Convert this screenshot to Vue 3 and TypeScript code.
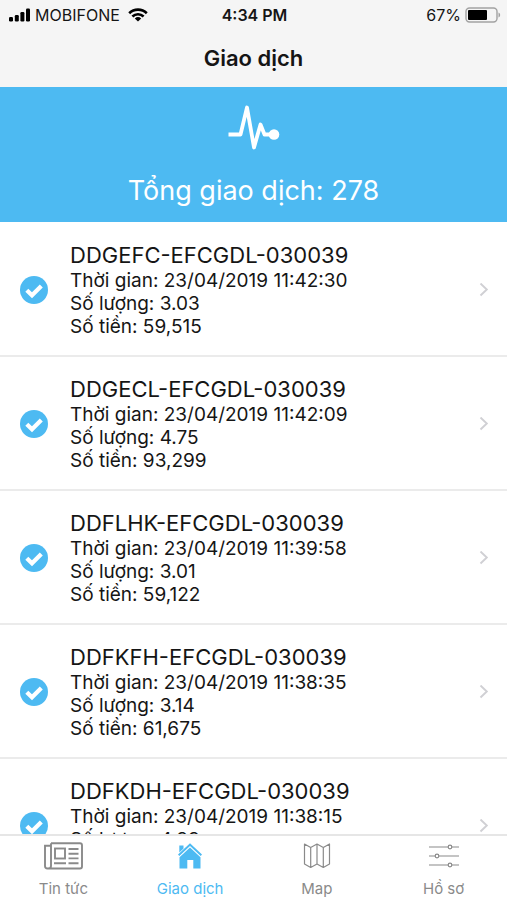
<script setup lang="ts">
interface Transaction {
  code: string
  time: string
  quantity: string
  amount: string
}

interface Tab {
  icon: 'news' | 'home' | 'map' | 'profile'
  label: string
  active?: boolean
}

const total = 278

const transactions: Transaction[] = [
  { code: 'DDGEFC-EFCGDL-030039', time: '23/04/2019 11:42:30', quantity: '3.03', amount: '59,515' },
  { code: 'DDGECL-EFCGDL-030039', time: '23/04/2019 11:42:09', quantity: '4.75', amount: '93,299' },
  { code: 'DDFLHK-EFCGDL-030039', time: '23/04/2019 11:39:58', quantity: '3.01', amount: '59,122' },
  { code: 'DDFKFH-EFCGDL-030039', time: '23/04/2019 11:38:35', quantity: '3.14', amount: '61,675' },
  { code: 'DDFKDH-EFCGDL-030039', time: '23/04/2019 11:38:15', quantity: '4.33', amount: '85,049' },
]

const tabs: Tab[] = [
  { icon: 'news', label: 'Tin tức' },
  { icon: 'home', label: 'Giao dịch', active: true },
  { icon: 'map', label: 'Map' },
  { icon: 'profile', label: 'Hồ sơ' },
]
</script>

<template>
  <div class="screen">
    <header class="top">
      <div class="status">
        <div class="carrier">
          <svg width="23" height="14" viewBox="0 0 23 14" aria-hidden="true">
            <rect x="1" y="9" width="4" height="4.500" rx="1.200" />
            <rect x="6.800" y="7" width="4" height="6.500" rx="1.200" />
            <rect x="12.400" y="4" width="4" height="9.500" rx="1.200" />
            <rect x="18" y="0.500" width="4" height="13" rx="1.200" />
          </svg>
          <span>MOBIFONE</span>
          <svg class="wifi" width="20" height="14" viewBox="0 0 20 14" aria-hidden="true">
            <path d="M1.200 5.200a12.600 12.600 0 0 1 17.600 0" />
            <path d="M4.400 8.500a8 8 0 0 1 11.200 0" />
            <path class="solid" d="M10 13.500L6.800 10.600a4.700 4.700 0 0 1 6.400 0z" />
          </svg>
        </div>
        <time class="clock">4:34 PM</time>
        <div class="power">
          <span>67%</span>
          <svg width="36" height="16" viewBox="0 0 36 16" aria-hidden="true">
            <rect x="1" y="1" width="31" height="14" rx="3.500" fill="none" stroke="#a2a2a2" stroke-width="1.400" />
            <rect x="3" y="3" width="19" height="10" rx="1" />
            <path d="M33.500 5.500c2.200.800 2.200 4.200 0 5z" fill="#a2a2a2" />
          </svg>
        </div>
      </div>
      <h1>Giao dịch</h1>
    </header>

    <section class="summary">
      <svg width="52" height="46" viewBox="0 0 52 46" aria-hidden="true">
        <path d="M0.500 29.500H12.500L19 2.500L26 42.500L32.500 19.500L36.500 29.500H45" fill="none" stroke="#fff" stroke-width="3.800" stroke-linejoin="round" />
        <circle cx="46" cy="29.500" r="5.300" fill="#fff" />
      </svg>
      <p>Tổng giao dịch: {{ total }}</p>
    </section>

    <main class="list">
      <a v-for="item in transactions" :key="item.code" class="row" href="#">
        <svg class="check" width="28" height="28" viewBox="0 0 28 28" aria-hidden="true">
          <circle cx="14" cy="14" r="14" fill="#4dbaf2" />
          <path d="M6.800 14.200L12 19.300L21.300 10" fill="none" stroke="#fff" stroke-width="4.200" />
        </svg>
        <div class="details">
          <h2>{{ item.code }}</h2>
          <p>Thời gian: {{ item.time }}</p>
          <p>Số lượng: {{ item.quantity }}</p>
          <p>Số tiền: {{ item.amount }}</p>
        </div>
        <svg class="chevron" width="10" height="14" viewBox="0 0 10 14" aria-hidden="true">
          <path d="M1.500 0.500L7.800 6.500L1.500 12.500" fill="none" stroke="#d0d0d4" stroke-width="1.900" />
        </svg>
      </a>
    </main>

    <nav class="tabs">
      <a v-for="tab in tabs" :key="tab.icon" href="#" class="tab" :class="{ active: tab.active }">
        <svg v-if="tab.icon === 'news'" width="40" height="28" viewBox="0 0 40 28" fill="none" stroke="currentColor" stroke-width="1.900" aria-hidden="true">
          <path d="M8 1.300H37Q39 1.300 39 3.300V24.500Q39 26.500 37 26.500H4.500Q2 26.500 2 24V3.800H8M8 1.300V24Q8 26.500 5 26.500" />
          <rect x="12" y="6.500" width="10" height="10" />
          <path d="M25.500 7H35.500M25.500 11.700H35.500M25.500 16.400H35.500M11 21.300H23M25.500 21.300H35.500" />
        </svg>
        <svg v-else-if="tab.icon === 'home'" width="26" height="28" viewBox="0 0 26 28" fill="currentColor" aria-hidden="true">
          <path d="M2.300 3.500H6.500V6.500L2.300 10.500Z" />
          <path d="M13 1.300L25 12.500L23.700 14L13 4.100L2.300 14L1 12.500Z" />
          <path d="M13 5.600L23.500 15.300V26.500H16.300V18H10.300V26.500H2.500V15.300Z" />
        </svg>
        <svg v-else-if="tab.icon === 'map'" width="28" height="28" viewBox="0 0 28 28" fill="none" stroke="currentColor" stroke-width="1.200" stroke-linejoin="round" aria-hidden="true">
          <path d="M1.500 2L7.700 5.500L14 2L20.300 5.500L26.500 2V22L20.300 25.500L14 22L7.700 25.500L1.500 22ZM7.700 5.500V25.500M14 2V22M20.300 5.500V25.500" />
        </svg>
        <svg v-else width="32" height="28" viewBox="0 0 32 28" fill="none" stroke="currentColor" stroke-width="1.200" aria-hidden="true">
          <path d="M1 5H20M24 5H31M1 14H7M11 14H31M1 23H20M24 23H31" />
          <circle cx="22" cy="5" r="1.800" />
          <circle cx="9" cy="14" r="1.800" />
          <circle cx="22" cy="23" r="1.800" />
        </svg>
        <span>{{ tab.label }}</span>
      </a>
    </nav>
  </div>
</template>

<style>
body {
  margin: 0;
  background: #fff;
}
</style>

<style scoped>
.screen {
  display: flex;
  flex-direction: column;
  height: 100vh;
  font-family: Inter, "Liberation Sans", sans-serif;
  color: #151515;
}

h1,
h2,
p {
  margin: 0;
  font-weight: 400;
}

svg {
  display: block;
  flex: none;
}

a {
  color: inherit;
  text-decoration: none;
}

.top {
  flex: none;
  background: #f5f5f5;
  padding-bottom: 13px;
}

.status {
  display: grid;
  grid-template-columns: 1fr auto 1fr;
  align-items: center;
  height: 30px;
  padding: 0 6px 0 8px;
  font-size: 16px;
  line-height: 20px;
}

.carrier,
.power {
  display: flex;
  align-items: center;
  gap: 4px;
}

.power {
  justify-content: flex-end;
}

.wifi {
  margin-left: 4px;
  fill: none;
  stroke: #000;
  stroke-width: 2.6;
}

.wifi .solid {
  fill: #000;
  stroke: none;
}

.clock {
  font-weight: 600;
}

h1 {
  padding-top: 12px;
  font-size: 22px;
  line-height: 32px;
  font-weight: 600;
  text-align: center;
}

.summary {
  flex: none;
  display: flex;
  flex-direction: column;
  align-items: center;
  gap: 22px;
  padding: 18px 0 13px;
  background: #4dbaf2;
  color: #fff;
  font-size: 27px;
  line-height: 36px;
}

.list {
  flex: 1;
  min-height: 0;
  padding-top: 1px;
  overflow: hidden;
}

.row {
  display: flex;
  align-items: center;
  gap: 22px;
  padding: 19px 18px 17px 20px;
  border-bottom: 2px solid #ebebeb;
}

.details {
  flex: 1;
  min-width: 0;
  font-size: 19px;
  line-height: 23px;
}

h2 {
  font-size: 22px;
  line-height: 27px;
}

.tabs {
  flex: none;
  display: grid;
  grid-template-columns: repeat(4, 1fr);
  border-top: 2px solid #e6e6e6;
  background: #fff;
}

.tab {
  display: flex;
  flex-direction: column;
  align-items: center;
  gap: 9px;
  padding: 6px 0 1px;
  font-size: 15px;
  line-height: 20px;
  color: #8a8a8a;
}

.tab.active {
  color: #4dbaf2;
}
</style>
